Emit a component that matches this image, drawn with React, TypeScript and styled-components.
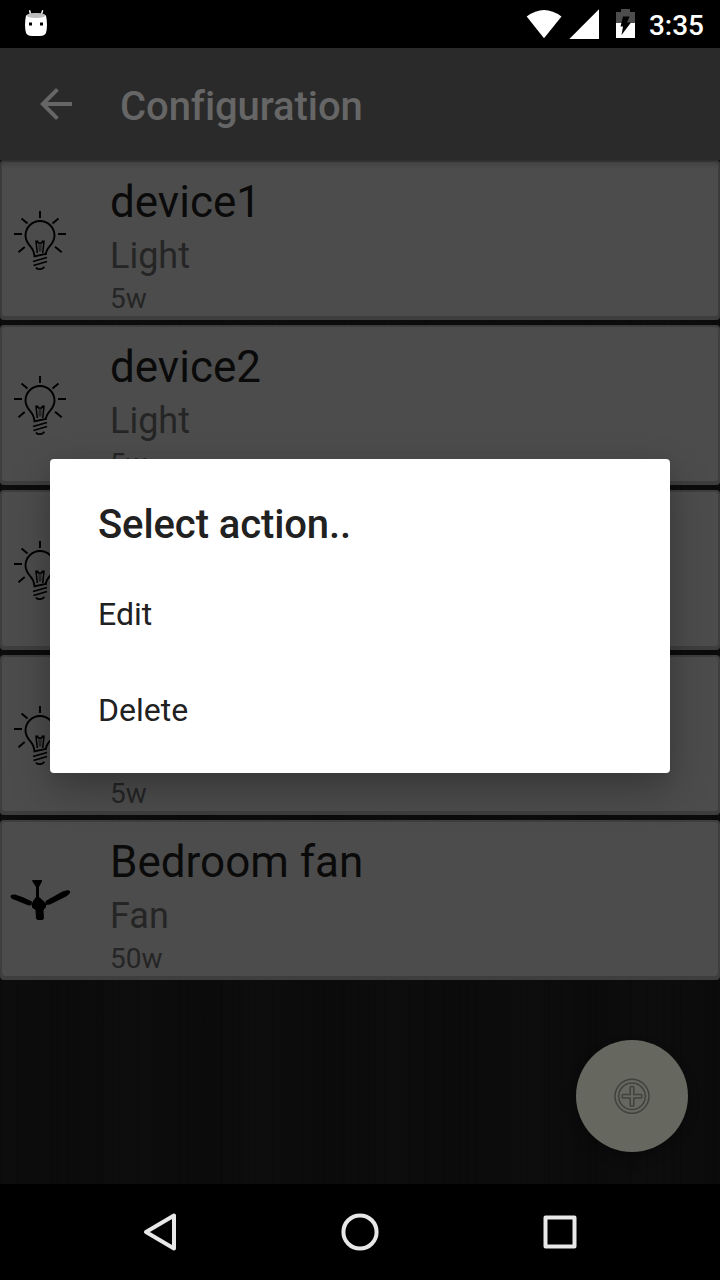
import React from "react";
import styled, { createGlobalStyle } from "styled-components";

const GlobalStyle = createGlobalStyle`
  *, *::before, *::after { box-sizing: border-box; }
  body { margin: 0; background: #000; font-family: Roboto, "Noto Sans", sans-serif; }
  svg { display: block; flex: none; }
`;

const Screen = styled.div`
  position: relative;
  display: flex;
  flex-direction: column;
  width: 720px;
  height: 1280px;
  overflow: hidden;
  background: #000;
`;

const StatusBar = styled.header`
  display: flex;
  align-items: center;
  height: 48px;
  flex: none;
  padding: 0 16px 0 24px;
  background: #000;
`;

const StatusIcons = styled.div`
  display: flex;
  align-items: center;
  margin-left: auto;
`;

const Clock = styled.time`
  margin-left: 14px;
  padding-top: 3px;
  color: #fff;
  font-size: 28px;
  font-weight: 500;
  line-height: 33px;
`;

const AppBar = styled.div`
  display: flex;
  align-items: center;
  gap: 40px;
  height: 112px;
  flex: none;
  padding: 2px 32px 0;
  background: #2a2a2a;
`;

const AppTitle = styled.h1`
  margin: 0;
  padding-top: 3px;
  color: #666;
  font-size: 40px;
  font-weight: 500;
  line-height: 47px;
  letter-spacing: -0.08px;
`;

const BackButton = styled.button`
  padding: 0 0 2px;
  border: 0;
  background: none;
`;

const Content = styled.main`
  position: relative;
  flex: 1;
  background:
    repeating-linear-gradient(90deg, rgba(0, 0, 0, 0.12) 0 1px, transparent 3px 9px, rgba(0, 0, 0, 0.06) 11px, transparent 13px 17px),
    repeating-linear-gradient(90deg, transparent 0 13px, rgba(0, 0, 0, 0.1) 16px, transparent 19px 41px),
    repeating-linear-gradient(90deg, transparent 0, rgba(0, 0, 0, 0.16) 65px, transparent 131px),
    #0d0d0d;
`;

const DeviceList = styled.ul`
  display: flex;
  flex-direction: column;
  gap: 5px;
  margin: 0;
  padding: 0;
  list-style: none;
`;

const DeviceCard = styled.li<{ $shaded?: boolean }>`
  display: flex;
  height: 160px;
  border-radius: 4px;
  background: #3e3e3e;
  padding: 2px 2px 4px;
  ${(p) => p.$shaded && "box-shadow: inset 0 2px 2px #303030;"}
`;

const CardFace = styled.div<{ $shaded?: boolean }>`
  display: flex;
  flex: 1;
  gap: 40px;
  padding-left: 8px;
  border-radius: 3px;
  background: ${(p) =>
    p.$shaded ? "linear-gradient(#424242, #4c4c4c 7px)" : "#4c4c4c"};
`;

const DeviceIcon = styled.div`
  display: flex;
  align-items: center;
  width: 60px;
  padding-top: 2px;
`;

const DeviceText = styled.div`
  display: grid;
  grid-template-rows: 52px 42px 33px;
  align-content: start;
  row-gap: 6px;
  padding-top: 14px;
`;

const DeviceName = styled.span`
  color: #0a0a0a;
  font-size: 44px;
  line-height: 52px;
`;

const DeviceKind = styled.span`
  color: #252525;
  font-size: 36px;
  line-height: 44px;
`;

const DevicePower = styled.span`
  color: #252525;
  font-size: 28px;
  line-height: 33px;
`;

const AddButton = styled.button`
  position: absolute;
  right: 32px;
  bottom: 32px;
  display: flex;
  align-items: center;
  justify-content: center;
  width: 112px;
  height: 112px;
  padding: 0;
  border: 0;
  border-radius: 50%;
  background: #66675f;
  box-shadow: 0 6px 12px rgba(0, 0, 0, 0.25);
`;

const NavBar = styled.nav`
  display: flex;
  align-items: center;
  justify-content: center;
  gap: 160px;
  height: 96px;
  flex: none;
  background: #000;
`;

const Dialog = styled.section`
  position: absolute;
  top: 459px;
  left: 50px;
  width: 620px;
  height: 314px;
  padding-top: 42px;
  border-radius: 4px;
  background: #fff;
  color: #212121;
  box-shadow: 0 16px 40px rgba(0, 0, 0, 0.26), 0 4px 16px rgba(0, 0, 0, 0.06);
`;

const DialogTitle = styled.h2`
  margin: 0 0 18px;
  padding: 0 48px;
  font-size: 40px;
  font-weight: 500;
  line-height: 47px;
  letter-spacing: -0.1px;
`;

const DialogAction = styled.button`
  display: block;
  width: 100%;
  height: 96px;
  padding: 0 48px;
  border: 0;
  background: none;
  color: #212121;
  font: 32px/96px Roboto, sans-serif;
  text-align: left;
`;

const BulbIcon = () => (
  <svg width="60" height="60" viewBox="0 0 60 60" fill="none" stroke="#000" strokeWidth="1.9">
    <path d="M30 1v7M4 24h8M48 24h8M11.5 8.5l6 5M48.5 8.5l-6 5M8.5 42.3l6.2-5.300M51.7 42.3l-6.700-5.500" />
    <path d="M24.300 45.500C24.300 36 15.500 35.500 15.500 25.500a14.500 14.500 0 0 1 29 0C44.500 35.500 36 36 35.700 45" />
    <path d="M27.300 43L26 31.500l2.700 1.500h2.600l2.700-1.500L32.700 43M26 31.300h2.500M31.500 31.300H34" strokeWidth="1.500" />
    <path d="M29 33.500l.3 8M31 33.500l-.3 8" strokeWidth=".7" />
    <path d="M23.500 46.500l12.500-2.600M23 51.500l14-4M23.500 55.500l13.500-4M26 57.500c1.500 2.300 6.500 2.300 8.300-.8" strokeWidth="1.800" />
  </svg>
);

const FanIcon = () => (
  <svg width="60" height="60" viewBox="0 0 60 60" fill="#000">
    <path d="M22 10h10v1.500l-3 5.500v10l4 3.500 3 3v3.500l-2.500 3 .5 8.500-1.500 1.500h-5l-1.500-1.500-.5-8.500-3.500-2.500v-4.500l1.500-2.500 2.500-3.500V17l-3.500-5.500z" />
    <path d="M1.500 24.800L5 24.600l8 2.600 9 4.300-.5 4-3.500-.2L2 28.800Q-.7 27 1.500 24.800z" />
    <path d="M35.500 31L52.500 21.500l4.500-1.200q3.700-.3 3.200 2.600L57 26 40 34.500l-4 .5z" />
  </svg>
);

const AndroidHead = () => (
  <svg width="24" height="28" viewBox="0 0 24 28">
    <path d="M5.500.3l1.300 5M18.700.3l-1.500 5" stroke="#fff" strokeWidth="1.400" />
    <path d="M2 5.500Q12 1 22 5.500 24 15.500 22 23 20.500 26 16 26H8Q3.500 26 2 23 0 15.500 2 5.500z" fill="#fff" />
    <ellipse cx="12" cy="5.600" rx="9.500" ry="2.500" fill="#bdbdbd" />
    <path d="M5 12.500h3v3H5zM16 12.500h3v3h-3z" fill="#000" />
  </svg>
);

const StatusGlyphs = () => (
  <svg width="109" height="30" viewBox="0 0 109 30">
    <path d="M.7 7.500Q18-5.500 35.500 7.500L18 29.300z" fill="#fff" />
    <path d="M73 .3V30H43.300z" fill="#fff" />
    <path d="M90 14V3h5V0h9v3h5v11z" fill="#4d4d4d" />
    <path d="M90 14h19v15H90z" fill="#fff" />
    <path d="M97 7.500h6.500l-2.500 6h4l-9.500 12.500 1.500-8.500H94.500z" fill="#000" />
  </svg>
);

const PlusIcon = () => (
  <svg width="36" height="36" viewBox="0 0 36 36" fill="none" stroke="#41423d" strokeWidth="1.500">
    <circle cx="18" cy="18.300" r="17" />
    <circle cx="18" cy="18.300" r="13.300" />
    <path d="M16.200 9.300q0-.8.8-.8h2q.8 0 .8.800v7.200h7.200q.8 0 .8.800v2q0 .8-.8.800h-7.200v7.200q0 .8-.8.800h-2q-.8 0-.8-.8v-7.200H9q-.8 0-.8-.8v-2q0-.8.800-.8h7.200z" />
  </svg>
);

const devices = [
  { id: 1, icon: "bulb", name: "device1", kind: "Light", power: "5w" },
  { id: 2, icon: "bulb", name: "device2", kind: "Light", power: "5w" },
  { id: 3, icon: "bulb", name: "", kind: "", power: "" },
  { id: 4, icon: "bulb", name: "", kind: "", power: "5w" },
  { id: 5, icon: "fan", name: "Bedroom fan", kind: "Fan", power: "50w" },
];

export default function App() {
  return (
    <Screen>
      <GlobalStyle />
      <StatusBar>
        <AndroidHead />
        <StatusIcons>
          <StatusGlyphs />
          <Clock>3:35</Clock>
        </StatusIcons>
      </StatusBar>
      <AppBar>
        <BackButton aria-label="Back">
          <svg width="48" height="48" viewBox="0 0 24 24" fill="#666">
            <path d="M20 11H7.830l5.590-5.590L12 4l-8 8 8 8 1.410-1.410L7.830 13H20v-2z" />
          </svg>
        </BackButton>
        <AppTitle>Configuration</AppTitle>
      </AppBar>
      <Content>
        <DeviceList>
          {devices.map((d, i) => (
            <DeviceCard key={d.id} $shaded={i === 0}>
              <CardFace $shaded={i === 0}>
                <DeviceIcon>{d.icon === "fan" ? <FanIcon /> : <BulbIcon />}</DeviceIcon>
                <DeviceText>
                  <DeviceName>{d.name}</DeviceName>
                  <DeviceKind>{d.kind}</DeviceKind>
                  <DevicePower>{d.power}</DevicePower>
                </DeviceText>
              </CardFace>
            </DeviceCard>
          ))}
        </DeviceList>
        <AddButton aria-label="Add device">
          <PlusIcon />
        </AddButton>
      </Content>
      <NavBar>
        <svg width="40" height="40" viewBox="0 0 40 40" fill="none" stroke="#e8e8e8" strokeWidth="4" strokeLinejoin="round">
          <path d="M34 3.500v33L6 20z" />
        </svg>
        <svg width="40" height="40" viewBox="0 0 40 40" fill="none" stroke="#e8e8e8" strokeWidth="4">
          <circle cx="20" cy="20" r="16.600" />
        </svg>
        <svg width="40" height="40" viewBox="0 0 40 40" fill="none" stroke="#e8e8e8" strokeWidth="4" strokeLinejoin="round">
          <path d="M5.500 5.500h29v29h-29z" />
        </svg>
      </NavBar>
      <Dialog role="dialog">
        <DialogTitle>Select action..</DialogTitle>
        <DialogAction>Edit</DialogAction>
        <DialogAction>Delete</DialogAction>
      </Dialog>
    </Screen>
  );
}
